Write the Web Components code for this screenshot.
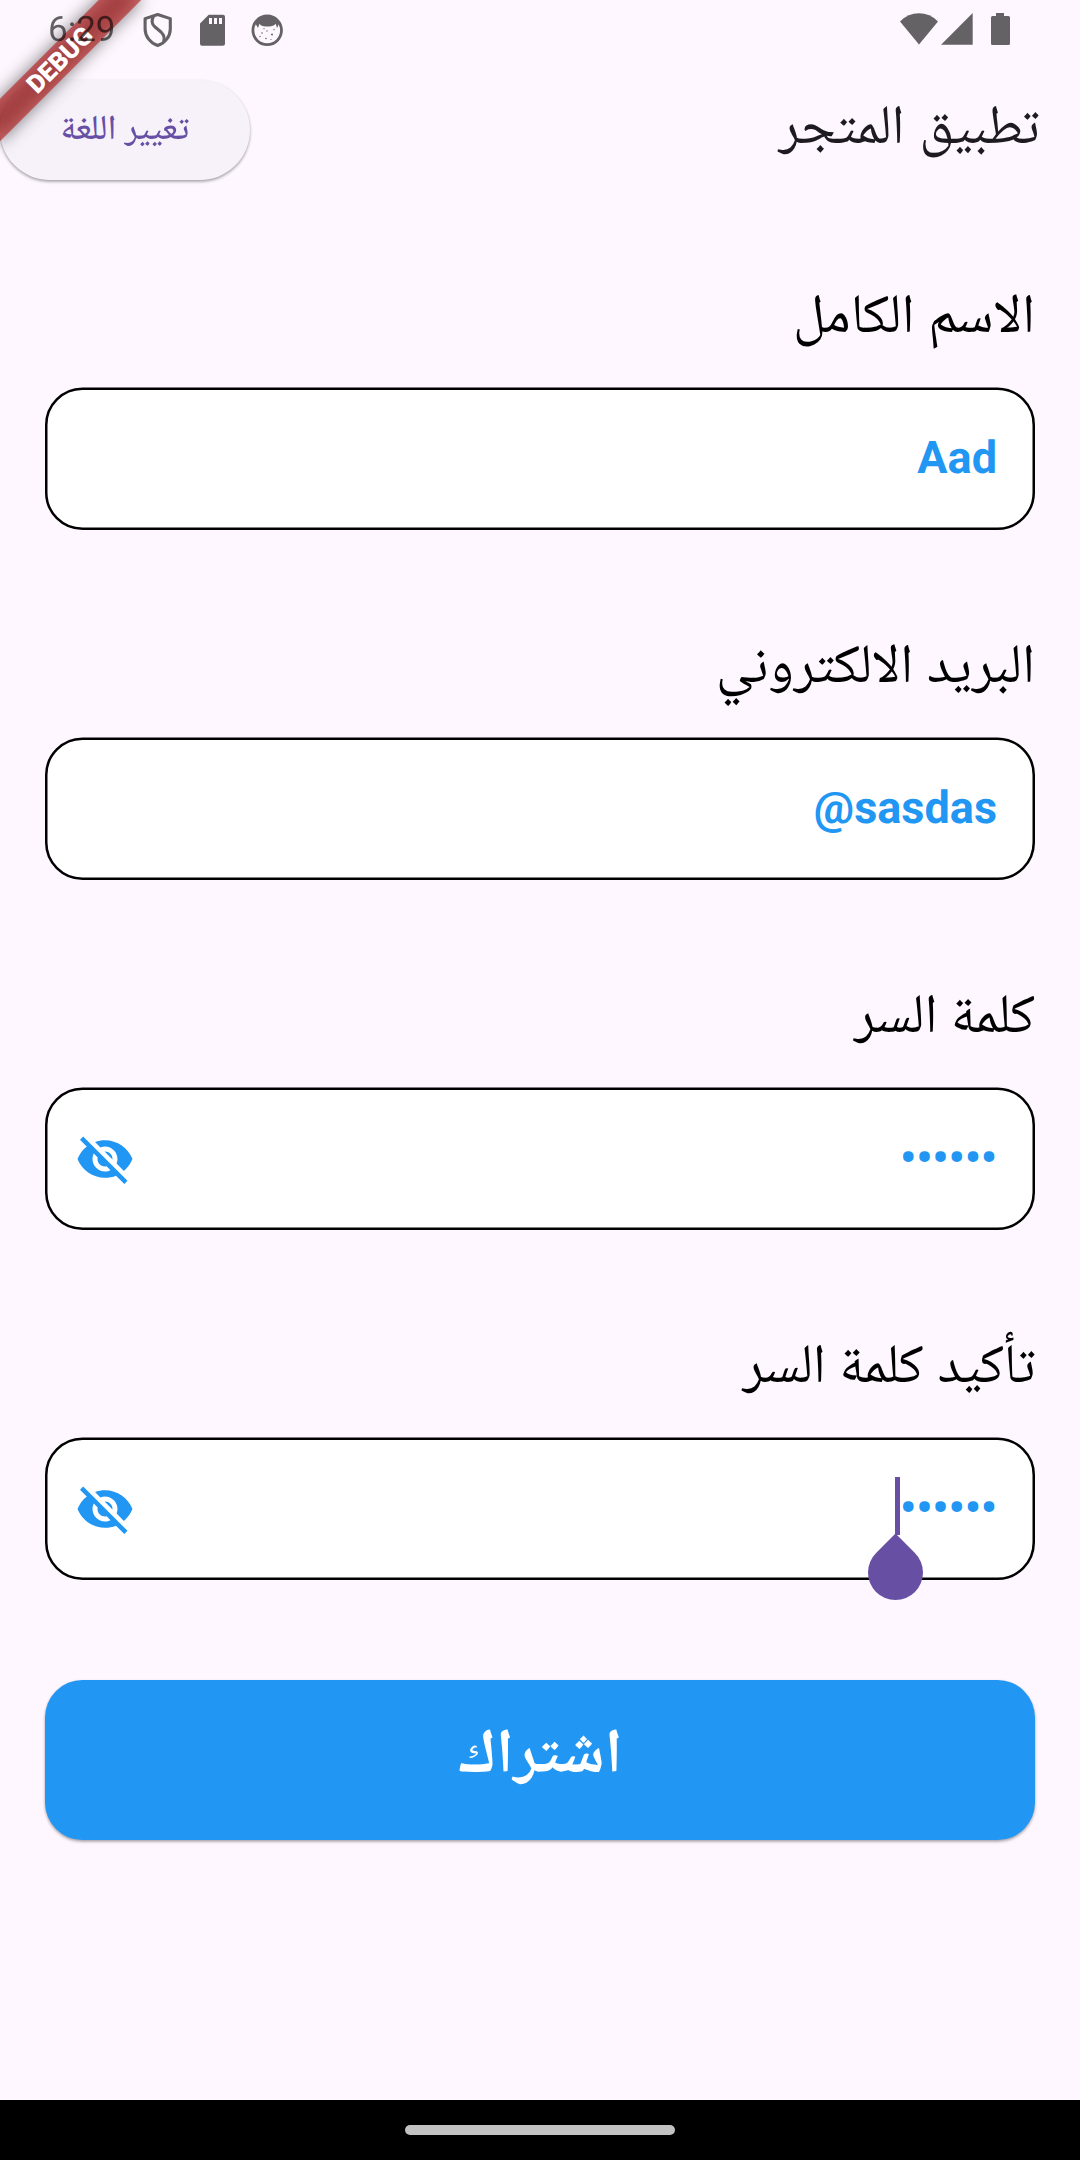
<!DOCTYPE html>
<html lang="ar">
<head>
<meta charset="utf-8">
<title>تطبيق المتجر</title>
<style>
  html, body { margin: 0; padding: 0; }
  body { width: 1080px; height: 2160px; overflow: hidden; background: #fef7ff; font-family: Roboto, "Noto Naskh Arabic", sans-serif; text-rendering: geometricPrecision; }
</style>
</head>
<body>
<store-app></store-app>
<script>
const define = (name, html, setup) => {
  const tpl = document.createElement('template');
  tpl.innerHTML = html;
  customElements.define(name, class extends HTMLElement {
    constructor() {
      super();
      this.attachShadow({ mode: 'open' }).append(tpl.content.cloneNode(true));
    }
    connectedCallback() { if (setup) setup(this, this.shadowRoot); }
  });
};

define('status-bar', `
<style>
  :host { display: flex; justify-content: space-between; align-items: flex-start; height: 60px; width: 1080px; box-sizing: border-box; padding: 0 69px 0 48px; direction: ltr; color: #000; opacity: .6; }
  .side { display: flex; }
  .time { font-size: 35px; line-height: 60px; width: 95px; white-space: nowrap; }
  svg { display: block; }
</style>
<div class="side">
  <div class="time">6:29</div>
  <svg width="150" height="60" viewBox="143 0 150 60">
    <g fill="none" stroke="#000" stroke-width="3.1" stroke-linejoin="round">
      <path d="M157.7 14.5 170.3 18.6V29C170.3 36.5 165 43 157.7 45.5 150.4 43 145.1 36.5 145.1 29V18.6Z"/>
      <path d="M153.5 16.2C151.5 20 151.5 23.5 154.5 26.5L161 32C164 35 165 38 163.6 41.5"/>
    </g>
    <path d="M208.7 14.7H223Q225 14.7 225 16.7V43.8Q225 45.8 223 45.8H202Q200 45.8 200 43.8V23.4ZM209 18V24H212V18ZM214 18V24H217V18ZM219 18V24H222V18Z" fill-rule="evenodd"/>
    <circle cx="267.2" cy="30.3" r="14.3" fill="none" stroke="#000" stroke-width="2.8"/>
    <path d="M255 23Q259 16 267.2 15.5 275.5 16 279.5 23L277 28 275.7 23.7Q273 27 267.5 26.4 261.500 27 259.5 23.7L258 28Z"/>
    <g><circle cx="262" cy="33" r=".8"/><circle cx="272" cy="34.5" r="1"/><circle cx="267" cy="31" r=".7"/><circle cx="260" cy="36.5" r=".7"/><circle cx="266" cy="38.5" r=".8"/><circle cx="274" cy="29.5" r=".7"/><circle cx="271" cy="39.5" r=".6"/><circle cx="264" cy="28.7" r=".6"/></g>
  </svg>
</div>
<svg width="111" height="60" viewBox="900 0 111 60">
  <path d="M900 21.5Q908 13.3 919 13.3T938 21.5L919 44.5Z"/>
  <path d="M941 44.7 972.7 13V44.7Z"/>
  <path d="M996 13H1004V16H1008.5Q1010 16 1010 17.5V43.5Q1010 45 1008.5 45H992.5Q991 45 991 43.5V17.5Q991 16 992.5 16H996Z"/>
</svg>`);

/* A word set slightly condensed; --sx is its horizontal scale, --pull closes the gap it leaves. */
define('tight-word', `
<style>
  :host { display: inline-block; transform: scaleX(var(--sx, 1)); transform-origin: 100% 50%; margin-left: var(--pull, 0); }
</style><slot></slot>`);

define('pill-button', `
<style>
  :host { display: flex; align-items: center; justify-content: center; width: 250px; height: 100px; box-sizing: border-box; padding-bottom: 4px; border-radius: 50px; background: #f7f2fa; color: #6750a4; font-size: 35px; line-height: 50px; font-weight: 500; box-shadow: 0 2px 3px rgba(0,0,0,.25), 0 1px 3px rgba(0,0,0,.12); }
  span { direction: rtl; }
</style><span><slot></slot></span>`);

define('app-bar', `
<style>
  :host { display: flex; justify-content: space-between; align-items: center; height: 140px; padding-right: 40px; direction: ltr; }
  .title { font-size: 55px; line-height: 80px; padding-bottom: 10px; color: #1d1b20; white-space: nowrap; direction: rtl; }
</style>
<slot name="action"></slot><div class="title"><slot></slot></div>`);

define('cursor-mark', `
<style>
  :host { position: absolute; width: 5px; height: 58px; background: #6750a4; }
  i { position: absolute; left: -27.3px; top: 68.2px; width: 55px; height: 55px; border-radius: 0 50% 50% 50%; background: #6750a4; transform: rotate(45deg); }
</style><i></i>`);

define('form-field', `
<style>
  :host { display: flex; flex-direction: column; direction: rtl; height: 350px; padding: 0 45px; }
  .label { font-size: 55px; line-height: 100px; padding: 64px 0 23px; color: #000; white-space: nowrap; }
  .box { display: grid; height: 143px; }
  .box > * { grid-area: 1 / 1; }
  .frame { display: block; }
  .row { display: flex; align-items: center; justify-content: space-between; padding: 0 38px 0 30px; }
  .value { position: relative; color: #2196f3; font-weight: 700; font-size: 45px; line-height: 60px; padding-bottom: 2px; white-space: nowrap; unicode-bidi: isolate; direction: ltr; }
  .eye { display: none; fill: #2196f3; }
  :host([secret]) .eye { display: block; }
  cursor-mark { display: none; left: -5px; top: -1px; }
  :host([active]) cursor-mark { display: block; }
</style>
<div class="label"><slot name="label"></slot></div>
<div class="box">
  <svg class="frame" width="990" height="143"><rect x="1.25" y="1.75" width="987.5" height="140" rx="36.25" fill="#fff" stroke="#000" stroke-width="2.5"/></svg>
  <div class="row">
    <div class="value"><slot></slot><cursor-mark></cursor-mark></div>
    <svg class="eye" width="60" height="60" viewBox="0 0 24 24"><path d="M12 7c2.76 0 5 2.24 5 5 0 .65-.13 1.26-.36 1.83l2.92 2.92c1.51-1.26 2.7-2.89 3.43-4.75-1.73-4.39-6-7.5-11-7.5-1.4 0-2.74.25-3.98.7l2.16 2.16C10.74 7.13 11.35 7 12 7zM2 4.27l2.28 2.28.46.46C3.08 8.3 1.78 10.02 1 12c1.73 4.39 6 7.5 11 7.5 1.55 0 3.03-.3 4.38-.84l.42.42L19.73 22 21 20.73 3.27 3 2 4.27zM7.53 9.8l1.55 1.55c-.05.21-.08.43-.08.65 0 1.66 1.34 3 3 3 .22 0 .44-.03.65-.08l1.55 1.55c-.67.33-1.41.53-2.2.53-2.76 0-5-2.24-5-5 0-.79.2-1.53.53-2.2zm4.31-.78l3.15 3.15.02-.16c0-1.66-1.34-3-3-3l-.17.01z"/></svg>
  </div>
</div>`);

define('submit-button', `
<style>
  :host { display: flex; align-items: center; justify-content: center; margin: 80px 45px 0; height: 160px; box-sizing: border-box; padding-bottom: 17px; border-radius: 37.5px; background: #2196f3; color: #fff; font-size: 62.5px; line-height: 80px; font-weight: 700; box-shadow: 0 2px 3px rgba(0,0,0,.25), 0 1px 3px rgba(0,0,0,.12); }
</style><span><slot></slot></span>`);

define('nav-bar', `
<style>
  :host { display: flex; align-items: center; justify-content: center; height: 60px; background: #000; }
  i { width: 270px; height: 10px; border-radius: 5px; background: #c2c2c2; }
</style><i></i>`);

define('debug-banner', `
<style>
  :host { position: absolute; left: 0; top: 0; width: 240px; height: 240px; overflow: hidden; pointer-events: none; direction: ltr; }
  svg { display: block; }
  text { font: 900 25.5px Roboto, sans-serif; fill: #fff; }
</style>
<svg width="240" height="240">
  <defs><filter id="soft" x="-20%" y="-200%" width="140%" height="500%"><feGaussianBlur stdDeviation="8.5"/></filter></defs>
  <g transform="translate(60 60) rotate(-45)">
    <rect x="-100" y="-15" width="200" height="30" fill="#000" fill-opacity=".5" filter="url(#soft)"/>
    <rect x="-100" y="-15" width="200" height="30" fill="#b71c1c" fill-opacity=".63"/>
    <text x="0" y="8.5" text-anchor="middle">DEBUG</text>
  </g>
</svg>`);

define('store-app', `
<style>
  :host { display: flex; flex-direction: column; position: relative; width: 1080px; height: 2160px; background: #fef7ff; }
  main { flex: 1; display: flex; flex-direction: column; }
  status-bar { position: relative; z-index: 2; }
  debug-banner { z-index: 1; }
</style>
<status-bar></status-bar>
<app-bar><tight-word style="--sx:.964;--pull:-3px">تطبيق</tight-word> المتجر<pill-button slot="action"><tight-word style="--sx:.975;--pull:-1.6px">تغيير</tight-word> اللغة</pill-button></app-bar>
<main>
  <form-field><span slot="label">الاسم الكامل</span>Aad</form-field>
  <form-field><span slot="label">البريد <tight-word style="--sx:.99">الالكتروني</tight-word></span>@sasdas</form-field>
  <form-field secret><span slot="label">كلمة السر</span>••••••</form-field>
  <form-field secret active><span slot="label"><tight-word style="--sx:.962;--pull:-3.6px">تأكيد</tight-word> كلمة السر</span>••••••</form-field>
  <submit-button>اشتراك</submit-button>
</main>
<nav-bar></nav-bar>
<debug-banner></debug-banner>`);
</script>
</body>
</html>
